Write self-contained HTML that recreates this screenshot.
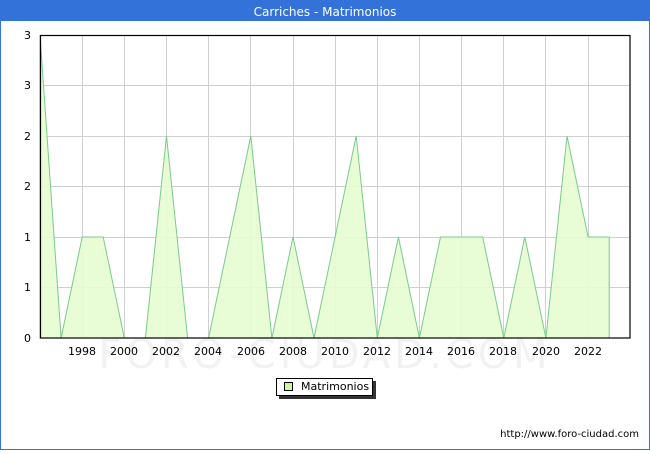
<!DOCTYPE html>
<html><head><meta charset="utf-8"><style>
body{margin:0;width:650px;height:450px;overflow:hidden;background:#fff;font-family:"DejaVu Sans","Liberation Sans",sans-serif}
</style></head><body>
<svg width="650" height="450" xmlns="http://www.w3.org/2000/svg" font-family="DejaVu Sans, Liberation Sans, sans-serif">
<rect x="0.5" y="0.5" width="649" height="449" fill="#fff" stroke="#3373d9"/>
<rect x="0" y="0" width="650" height="21" fill="#3373d9"/>
<text x="325" y="16" fill="#fff" font-size="12" text-anchor="middle">Carriches - Matrimonios</text>
<text x="325" y="368" fill="#f2f2f2" font-size="40" text-anchor="middle" letter-spacing="4">FORO-CIUDAD.COM</text>
<g stroke="#d0d0d0" stroke-width="1">
<line x1="40" y1="85.5" x2="630" y2="85.5"/><line x1="40" y1="136.5" x2="630" y2="136.5"/><line x1="40" y1="186.5" x2="630" y2="186.5"/><line x1="40" y1="237.5" x2="630" y2="237.5"/><line x1="40" y1="287.5" x2="630" y2="287.5"/>
<line x1="82.5" y1="35" x2="82.5" y2="338"/><line x1="124.5" y1="35" x2="124.5" y2="338"/><line x1="166.5" y1="35" x2="166.5" y2="338"/><line x1="208.5" y1="35" x2="208.5" y2="338"/><line x1="250.5" y1="35" x2="250.5" y2="338"/><line x1="293.5" y1="35" x2="293.5" y2="338"/><line x1="335.5" y1="35" x2="335.5" y2="338"/><line x1="377.5" y1="35" x2="377.5" y2="338"/><line x1="419.5" y1="35" x2="419.5" y2="338"/><line x1="461.5" y1="35" x2="461.5" y2="338"/><line x1="503.5" y1="35" x2="503.5" y2="338"/><line x1="545.5" y1="35" x2="545.5" y2="338"/><line x1="588.5" y1="35" x2="588.5" y2="338"/>
</g>
<polygon fill="#e5fdd0" fill-opacity="0.9" stroke="#7bc98e" stroke-width="1" points="40,338 40,35 61.1,338 82.2,237 103.2,237 124.3,338 145.4,338 166.5,136 187.6,338 208.6,338 229.7,237 250.8,136 271.9,338 293,237 314,338 335.1,237 356.2,136 377.3,338 398.4,237 419.4,338 440.5,237 461.6,237 482.7,237 503.8,338 524.8,237 545.9,338 567,136 588.1,237 609.2,237 609.2,338"/>
<rect x="40.5" y="35.5" width="589.5" height="302.5" fill="none" stroke="#000" stroke-width="1.2"/>
<g font-size="11" fill="#000" text-anchor="end">
<text x="31" y="39">3</text><text x="31" y="89">3</text><text x="31" y="140">2</text><text x="31" y="190">2</text><text x="31" y="241">1</text><text x="31" y="291">1</text><text x="31" y="342">0</text>
</g>
<g font-size="11" fill="#000" text-anchor="middle">
<text x="82" y="355">1998</text><text x="124" y="355">2000</text><text x="166" y="355">2002</text><text x="208" y="355">2004</text><text x="251" y="355">2006</text><text x="293" y="355">2008</text><text x="335" y="355">2010</text><text x="377" y="355">2012</text><text x="419" y="355">2014</text><text x="461" y="355">2016</text><text x="503" y="355">2018</text><text x="546" y="355">2020</text><text x="588" y="355">2022</text>
</g>
<rect x="279" y="381" width="97" height="18" fill="#333"/>
<rect x="276.5" y="378.5" width="96" height="17" fill="#fff" stroke="#000"/>
<rect x="284.5" y="382.5" width="8" height="8" fill="#ccf59e" stroke="#000"/>
<text x="301" y="390" font-size="11">Matrimonios</text>
<text x="639" y="437" font-size="10" text-anchor="end">http://www.foro-ciudad.com</text>
</svg>
</body></html>
